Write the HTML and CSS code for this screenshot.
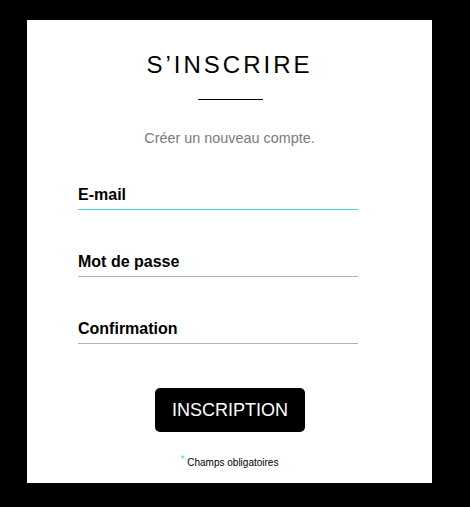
FILE: index.html
```html
<!DOCTYPE html>
<html lang="fr">
<head>
<meta charset="utf-8">
<title>S'inscrire</title>
<link rel="stylesheet" href="styles.css">
</head>
<body>
<div class="card">
  <h1 class="title">S’INSCRIRE</h1>
  <div class="divider"></div>
  <p class="subtitle">Créer un nouveau compte.</p>
  <form class="form">
    <div class="fields">
      <div class="field field-active">E-mail</div>
      <div class="field">Mot de passe</div>
      <div class="field">Confirmation</div>
    </div>
    <button type="button" class="btn">INSCRIPTION</button>
    <p class="note"><span class="star">*</span> Champs obligatoires</p>
  </form>
</div>
</body>
</html>
```
FILE: styles.css
```css
html, body {
  margin: 0;
  padding: 0;
  background: #000;
}
body {
  font-family: "Liberation Sans", Arial, sans-serif;
  padding: 20px 0 0 27px;
}
.card {
  background: #fff;
  width: 405px;
  height: 463px;
  box-sizing: border-box;
  padding-top: 31px;
  display: flex;
  flex-direction: column;
  align-items: center;
}
.title {
  margin: 0;
  font-weight: normal;
  font-size: 24px;
  line-height: 28px;
  letter-spacing: 3px;
  color: #000;
}
.divider {
  width: 65px;
  height: 1px;
  background: #000;
  margin-top: 20px;
  margin-left: 1px;
}
.subtitle {
  margin: 30px 0 0;
  font-size: 14.4px;
  line-height: 16px;
  color: #7a7a7a;
}
.form {
  margin-top: 40px;
  align-self: stretch;
  display: flex;
  flex-direction: column;
  align-items: center;
}
.fields {
  align-self: flex-start;
  margin-left: 51px;
  width: 280px;
  display: flex;
  flex-direction: column;
  gap: 43px;
  margin-bottom: 44px;
}
.field {
  font-size: 16px;
  font-weight: bold;
  line-height: 18px;
  color: #000;
  padding-bottom: 5px;
  border-bottom: 1px solid #b3b3b3;
}
.field-active {
  border-bottom-color: #35e3d8;
}
.btn {
  width: 150px;
  height: 44px;
  background: #000;
  color: #fff;
  border: none;
  border-radius: 5px;
  font-family: "Liberation Sans", Arial, sans-serif;
  font-size: 18px;
  padding: 0;
  margin-left: 1px;
}
.note {
  margin: 22px 0 0;
  font-size: 10px;
  line-height: 12px;
  color: #000;
}
.star {
  color: #35e3d8;
  font-size: 10px;
  vertical-align: 3px;
}
```
